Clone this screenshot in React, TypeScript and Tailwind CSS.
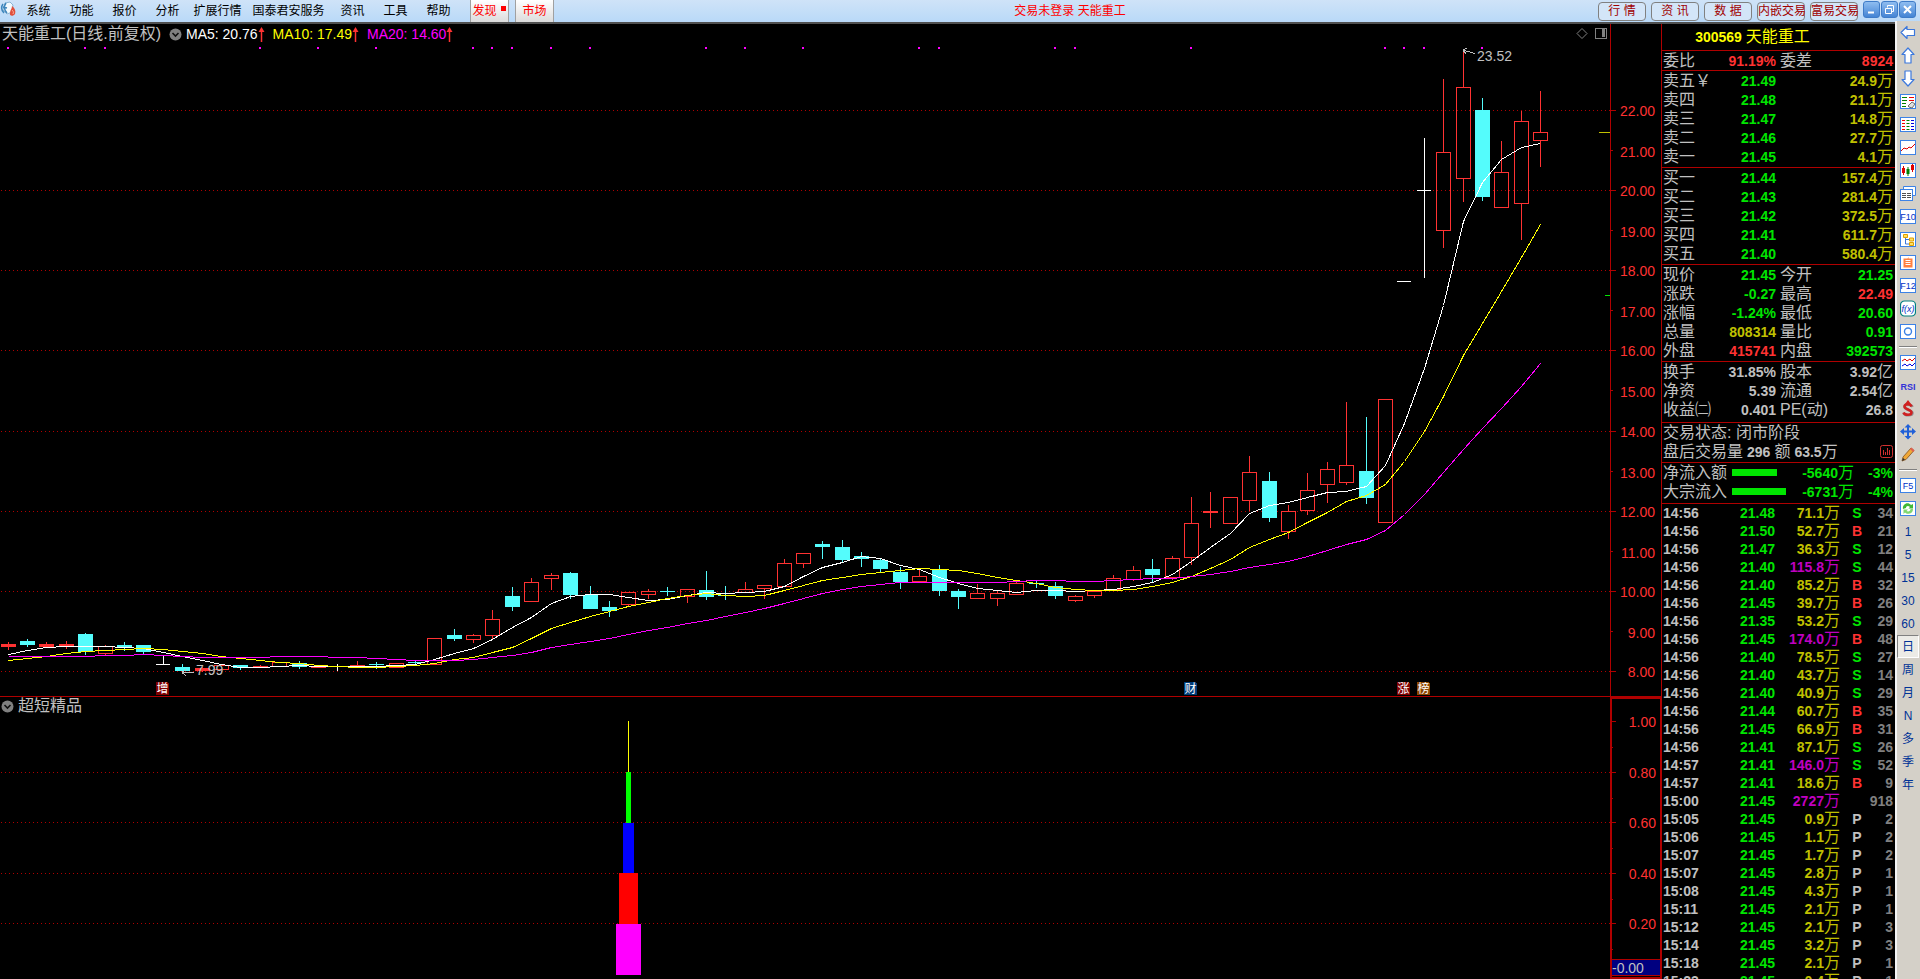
import { ReactNode } from "react";
import clsx from "clsx";

type Kind = "up" | "down" | "flat";
// kind, body top, body bottom, high, low
type Candle = [Kind, number, number, number, number];

const MENU = [
  { label: "系统", width: "w-[43px]" },
  { label: "功能", width: "w-[43px]" },
  { label: "报价", width: "w-[43px]" },
  { label: "分析", width: "w-[43px]" },
  { label: "扩展行情", width: "w-[57px]" },
  { label: "国泰君安服务", width: "w-[85px]" },
  { label: "资讯", width: "w-[43px]" },
  { label: "工具", width: "w-[43px]" },
  { label: "帮助", width: "w-[43px]" },
];

const CANDLES: Candle[] = [
  ["up", 644, 646, 642, 649], ["down", 641, 645, 639, 646], ["up", 644, 646, 642, 647], ["up", 644, 645, 641, 648],
  ["down", 634, 652, 633, 654], ["up", 646, 653, 645, 654], ["down", 645, 648, 642, 650], ["down", 645, 652, 645, 653],
  ["flat", 664, 664, 656, 664], ["down", 667, 671, 664, 671], ["up", 668, 670, 667, 671], ["up", 665, 669, 665, 669],
  ["down", 665, 668, 665, 669], ["up", 666, 667, 665, 667], ["up", 662, 666, 662, 666], ["down", 663, 667, 661, 668],
  ["up", 666, 667, 666, 667], ["flat", 666, 666, 664, 670], ["up", 665, 666, 661, 666], ["down", 664, 665, 662, 668],
  ["up", 663, 667, 663, 667], ["down", 662, 663, 661, 664], ["up", 638, 664, 638, 664], ["down", 635, 639, 629, 640],
  ["up", 635, 639, 634, 642], ["up", 619, 635, 610, 639], ["down", 596, 607, 587, 610], ["up", 582, 601, 578, 601],
  ["up", 575, 578, 573, 589], ["down", 573, 595, 572, 598], ["down", 595, 609, 586, 609], ["down", 607, 611, 601, 616],
  ["up", 592, 604, 592, 606], ["up", 591, 594, 589, 598], ["down", 591, 592, 587, 595], ["up", 589, 596, 589, 602],
  ["down", 590, 597, 571, 599], ["down", 595, 596, 586, 599], ["up", 589, 592, 582, 592], ["up", 585, 588, 585, 598],
  ["up", 563, 586, 559, 586], ["up", 553, 563, 553, 567], ["down", 544, 547, 541, 558], ["down", 547, 560, 540, 561],
  ["down", 556, 559, 552, 566], ["down", 560, 569, 558, 572], ["down", 572, 582, 567, 588], ["up", 576, 581, 570, 582],
  ["down", 570, 591, 565, 595], ["down", 591, 597, 589, 608], ["up", 593, 598, 584, 598], ["up", 593, 598, 591, 605],
  ["up", 583, 594, 582, 594], ["down", 583, 584, 581, 587], ["down", 586, 596, 582, 598], ["up", 596, 600, 595, 601],
  ["up", 591, 595, 591, 597], ["up", 578, 589, 575, 589], ["up", 570, 579, 566, 580], ["down", 569, 575, 559, 582],
  ["up", 558, 577, 556, 579], ["up", 523, 557, 497, 564], ["up", 511, 512, 492, 527], ["up", 497, 523, 497, 523],
  ["up", 472, 500, 456, 510], ["down", 481, 518, 472, 521], ["up", 511, 531, 505, 538], ["up", 490, 510, 473, 514],
  ["up", 469, 484, 462, 502], ["up", 465, 482, 402, 484], ["down", 471, 498, 417, 503], ["up", 399, 522, 399, 522],
  ["flat", 281, 281, 281, 281], ["flat", 190, 190, 138, 277], ["up", 152, 230, 79, 247], ["up", 87, 178, 50, 201],
  ["down", 110, 197, 98, 200], ["up", 172, 207, 141, 207], ["up", 121, 203, 111, 239], ["up", 132, 140, 91, 166],
];

const MA5 = [
  654, 650, 647, 646, 646, 646, 647, 648, 652, 656, 660, 664, 667, 667, 666, 665, 666, 666, 666, 666,
  665, 664, 659, 653, 648, 639, 627, 617, 603, 596, 594, 594, 597, 600, 599, 595, 592, 593, 592, 591,
  586, 576, 567, 562, 556, 558, 565, 569, 577, 583, 588, 590, 592, 590, 590, 591, 590, 589, 586, 582,
  574, 561, 547, 533, 513, 505, 502, 497, 492, 491, 486, 465, 423, 368, 305, 221, 182, 159, 147, 143,
];
const MA10 = [
  660, 658, 656, 653, 651, 650, 649, 648, 649, 651, 653, 656, 658, 660, 662, 663, 665, 666, 667, 667,
  666, 665, 663, 659, 657, 652, 647, 638, 628, 622, 616, 611, 606, 602, 598, 595, 593, 595, 596, 595,
  590, 585, 580, 577, 574, 572, 570, 568, 569, 570, 573, 577, 580, 583, 587, 589, 590, 590, 589, 586,
  582, 576, 568, 559, 547, 539, 532, 522, 512, 501, 495, 484, 461, 431, 396, 355, 323, 291, 257, 224,
];
const MA20 = [
  656, 656, 656, 656, 656, 655, 655, 654, 655, 656, 657, 657, 657, 657, 656, 656, 656, 657, 657, 658,
  659, 660, 660, 660, 659, 657, 655, 652, 647, 644, 641, 638, 634, 630, 627, 623, 620, 616, 612, 608,
  603, 598, 593, 589, 586, 584, 582, 582, 582, 582, 582, 582, 581, 580, 580, 581, 581, 580, 579, 578,
  578, 576, 574, 571, 567, 564, 561, 556, 550, 544, 539, 530, 514, 494, 472, 449, 428, 408, 386, 363,
];
const SIGNALS = [0, 4, 5, 13, 16, 19, 24, 25, 26, 28, 30, 36, 38, 41, 47, 48, 54, 55, 61, 71, 72, 73, 76];

const EVENTS = [
  { x: 156, text: "增", fill: "#800000" },
  { x: 1184, text: "财", fill: "#003c78" },
  { x: 1397, text: "涨", fill: "#800000" },
  { x: 1417, text: "榜", fill: "#8c4600" },
];

const ASKS = [
  ["卖五", "21.49", "24.9万"],
  ["卖四", "21.48", "21.1万"],
  ["卖三", "21.47", "14.8万"],
  ["卖二", "21.46", "27.7万"],
  ["卖一", "21.45", "4.1万"],
];
const BIDS = [
  ["买一", "21.44", "157.4万"],
  ["买二", "21.43", "281.4万"],
  ["买三", "21.42", "372.5万"],
  ["买四", "21.41", "611.7万"],
  ["买五", "21.40", "580.4万"],
];

const GREEN = "text-[#00e600]";
const RED = "text-[#ff3232]";
const GRAY = "text-[#c0c0c0]";
const OLIVE = "text-[#c0c000]";

// label, value, colour, label, value, colour
const SUMMARY = [
  ["现价", "21.45", GREEN, "今开", "21.25", GREEN],
  ["涨跌", "-0.27", GREEN, "最高", "22.49", RED],
  ["涨幅", "-1.24%", GREEN, "最低", "20.60", GREEN],
  ["总量", "808314", OLIVE, "量比", "0.91", GREEN],
  ["外盘", "415741", RED, "内盘", "392573", GREEN],
];
const FUNDAMENTALS = [
  ["换手", "31.85%", GRAY, "股本", "3.92亿", GRAY],
  ["净资", "5.39", GRAY, "流通", "2.54亿", GRAY],
  ["收益㈡", "0.401", GRAY, "PE(动)", "26.8", GRAY],
];

const TICKS = [
  ["14:56", "21.48", "71.1万", "S", "34"],
  ["14:56", "21.50", "52.7万", "B", "21"],
  ["14:56", "21.47", "36.3万", "S", "12"],
  ["14:56", "21.40", "115.8万", "S", "44"],
  ["14:56", "21.40", "85.2万", "B", "32"],
  ["14:56", "21.45", "39.7万", "B", "26"],
  ["14:56", "21.35", "53.2万", "S", "29"],
  ["14:56", "21.45", "174.0万", "B", "48"],
  ["14:56", "21.40", "78.5万", "S", "27"],
  ["14:56", "21.40", "43.7万", "S", "14"],
  ["14:56", "21.40", "40.9万", "S", "29"],
  ["14:56", "21.44", "60.7万", "B", "35"],
  ["14:56", "21.45", "66.9万", "B", "31"],
  ["14:56", "21.41", "87.1万", "S", "26"],
  ["14:57", "21.41", "146.0万", "S", "52"],
  ["14:57", "21.41", "18.6万", "B", "9"],
  ["15:00", "21.45", "2727万", "", "918"],
  ["15:05", "21.45", "0.9万", "P", "2"],
  ["15:06", "21.45", "1.1万", "P", "2"],
  ["15:07", "21.45", "1.7万", "P", "2"],
  ["15:07", "21.45", "2.8万", "P", "1"],
  ["15:08", "21.45", "4.3万", "P", "1"],
  ["15:11", "21.45", "2.1万", "P", "1"],
  ["15:12", "21.45", "2.1万", "P", "3"],
  ["15:14", "21.45", "3.2万", "P", "3"],
  ["15:18", "21.45", "2.1万", "P", "1"],
  ["15:23", "21.45", "0.4万", "P", "1"],
];

const PERIODS = ["1", "5", "15", "30", "60", "日", "周", "月", "N", "多", "季", "年"];

const barX = (i: number) => Math.floor(8 + i * 19.4);
const line = (ys: number[]) => ys.map((y, i) => `${barX(i) + 0.5},${y + 0.5}`).join(" ");

/* ---------- header ---------- */

function Logo() {
  return (
    <svg width="17" height="17" viewBox="0 0 17 17" aria-hidden="true">
      <path d="M5 2l5-1 3 3-1 7-5 2-4-4z" fill="#f4f9fd" stroke="#8ab4d4" />
      <path d="M3 3c-2 3-2 6 1 9M6 2C4 5 4 9 7 12M3 6l4 1" stroke="#3f86bc" strokeWidth="1.500" fill="none" />
      <path d="M12 5c3 2 4 5 3 8-2 3-6 2-5-1 0-3 2-4 2-7z" fill="#e0503c" />
      <path d="M12 9c1 1 2 2 1 4" stroke="#ffb09c" fill="none" />
    </svg>
  );
}

function WindowButton({ label, children }: { label: string; children: ReactNode }) {
  return (
    <button aria-label={label} className="flex h-[17px] w-[17px] items-center justify-center rounded-[3px] border border-[#3f7cc8] bg-linear-to-b from-[#8fbdf0] to-[#4484d4]">
      <svg width="11" height="11" viewBox="0 0 11 11" fill="none" stroke="#fff">{children}</svg>
    </button>
  );
}

function Header() {
  return (
    <header className="flex h-6 shrink-0 items-stretch border-b-2 border-[#505050] bg-linear-to-b from-[#cfe3f8] to-[#b9d9f8] text-[12px] leading-none text-black">
      <div className="flex w-[17px] items-start pt-px"><Logo /></div>
      <nav className="flex">
        {MENU.map((m) => (
          <button key={m.label} className={clsx("shrink-0 whitespace-nowrap text-center", m.width)}>{m.label}</button>
        ))}
      </nav>
      <div className="ml-2.5 flex gap-1.5 text-[#ff0000]">
        <button className="relative w-[39px] border-x border-[#a0a0a0] bg-linear-to-b from-white to-[#dcdcdc] pr-2.5">
          发现
          <span className="absolute right-0.5 top-1.5 size-[5px] bg-[#ff0000]" />
        </button>
        <button className="w-[39px] border-x border-[#a0a0a0] bg-linear-to-b from-white to-[#dcdcdc]">市场</button>
      </div>
      <p className="flex flex-1 items-center justify-center pr-3 text-[#ff0000]">交易未登录 天能重工</p>
      <div className="flex items-center gap-[5px] text-[#a00000]">
        {["行 情", "资 讯", "数 据", "内嵌交易", "富易交易"].map((b) => (
          <button key={b} className="h-[19px] w-12 whitespace-nowrap rounded-[4px] border border-[#808080] bg-[#d3e5f8] text-center">
            {b}
          </button>
        ))}
      </div>
      <div className="ml-[5px] mr-1 flex gap-px pt-px">
        <WindowButton label="最小化"><path d="M2 8.5h6" strokeWidth="2" /></WindowButton>
        <WindowButton label="还原"><path d="M3.5 3.5v-2h6v6h-2M1.5 4.5h6v5h-6z" /></WindowButton>
        <WindowButton label="关闭"><path d="M2 2l7 7M9 2l-7 7" strokeWidth="2" /></WindowButton>
      </div>
    </header>
  );
}

/* ---------- charts ---------- */

function FoldIcon() {
  return (
    <svg width="13" height="13" viewBox="0 0 13 13" aria-hidden="true">
      <circle cx="6.5" cy="6.5" r="6" fill="#808080" />
      <path d="M3.5 5l3 3 3-3" stroke="#101010" strokeWidth="1.6" fill="none" />
    </svg>
  );
}

function CandleShape({ candle, x }: { candle: Candle; x: number }) {
  const [kind, top, bottom, high, low] = candle;
  const color = kind === "up" ? "#ff3232" : kind === "down" ? "#54fcfc" : "#ffffff";
  return (
    <g stroke={color}>
      {high < top && <path d={`M${x + 0.5} ${high}V${top}`} />}
      {low > bottom && <path d={`M${x + 0.5} ${bottom}V${low + 1}`} />}
      {kind === "up" && <rect x={x - 6.5} y={top + 0.5} width="14" height={bottom - top} fill={bottom - top < 3 ? color : "none"} />}
      {kind === "down" && <rect x={x - 7} y={top} width="15" height={bottom - top} fill={color} stroke="none" />}
      {kind === "flat" && <path d={`M${x - 7} ${top + 0.5}h14`} />}
    </g>
  );
}

function PriceChart() {
  const prices = Array.from({ length: 15 }, (_, i) => 22 - i);
  const priceY = (p: number) => Math.round(110 + (22 - p) * 40.07);
  return (
    <section className="relative min-h-0 flex-[673]">
      <svg className="block h-full w-full" viewBox="0 24 1661 673" preserveAspectRatio="xMaxYMin meet" fill="none" shapeRendering="crispEdges">
        {prices.map((p) => (
          <g key={p} stroke="#b00000">
            {p % 2 === 0 && <path d={`M1 ${priceY(p) + 0.5}H1610`} strokeDasharray="1 3" />}
            <path d={`M1610 ${priceY(p) + 0.5}h${p % 2 === 0 ? 6 : 3}`} />
            <text x="1655" y={priceY(p) + (p % 2 === 0 ? 6 : 7)} textAnchor="end" fontSize="14" fill="#ff3232" stroke="none">{p.toFixed(2)}</text>
          </g>
        ))}
        <path d="M1610.5 24V697" stroke="#b00000" />
        <path d="M0 696.5H1661" stroke="#b00000" />
        <path d="M1599 132.5h11" stroke="#c0c000" />
        <path d="M1605 295.5h5" stroke="#00e600" />

        {SIGNALS.map((i) => <rect key={i} x={barX(i) - 1} y="47" width="2" height="2" fill="#ff00ff" />)}
        {CANDLES.map((c, i) => <CandleShape key={i} candle={c} x={barX(i)} />)}
        <polyline points={line(MA5)} stroke="#ffffff" />
        <polyline points={line(MA10)} stroke="#ffff00" />
        <polyline points={line(MA20)} stroke="#ff00ff" />

        <g stroke="#c0c0c0">
          <path d="M1463 50l12 3.500M1463 50l4-2M1463 50l3 4" />
          <path d="M182 672.500h12M182 672.500l4-3M182 672.500l4 3" />
        </g>
        <text x="1477" y="61" fontSize="14" fill="#c0c0c0">23.52</text>
        <text x="196" y="675" fontSize="14" fill="#c0c0c0">7.99</text>

        {EVENTS.map((e) => (
          <g key={e.text}>
            <path d={`M${e.x} 682h11l2 2v11h-13z`} fill={e.fill} />
            <text x={e.x + 6.5} y="693" textAnchor="middle" fontSize="12" fill="#ffffff">{e.text}</text>
          </g>
        ))}

        <g stroke="#808080">
          <path d="M1582 28.500l5 5-5 5-5-5z" shapeRendering="auto" />
          <rect x="1595.500" y="28.500" width="11" height="10" rx="1" />
          <path d="M1603.500 29v8" strokeWidth="3" />
        </g>
      </svg>
      <div className="absolute left-0.5 top-0 flex h-5 items-center gap-1 whitespace-nowrap text-[14px] leading-5">
        <h1 className="w-[163px] text-[16px] text-[#c0c0c0]">天能重工(日线.前复权)</h1>
        <button aria-label="折叠指标"><FoldIcon /></button>
        <Average label="MA5: 20.76" color="text-white" />
        <Average label="MA10: 17.49" color="text-[#ffff00]" />
        <Average label="MA20: 14.60" color="text-[#ff00ff]" />
      </div>
    </section>
  );
}

function Average({ label, color }: { label: string; color: string }) {
  return (
    <span className={clsx("flex items-center pr-1", color)}>
      {label}
      <svg width="7" height="15" viewBox="0 0 7 15" aria-hidden="true">
        <path d="M3.500 0l3 5h-6z" fill="#ff3232" />
        <path d="M3.500 4v11" stroke="#ff3232" strokeWidth="1.500" />
      </svg>
    </span>
  );
}

function IndicatorChart() {
  const levels: [string, number][] = [["1.00", 721], ["0.80", 772], ["0.60", 822], ["0.40", 873], ["0.20", 923]];
  return (
    <section className="relative min-h-0 flex-[282]">
      <svg className="block h-full w-full" viewBox="0 697 1661 282" preserveAspectRatio="xMaxYMin meet" fill="none" shapeRendering="crispEdges">
        {levels.map(([label, y], i) => (
          <g key={label} stroke="#b00000">
            {i > 0 && <path d={`M1 ${y + 0.5}H1610`} strokeDasharray="1 3" />}
            <path d={`M1611 ${y + 0.5}h5M1611 ${y + 26.5}h2`} />
            <text x="1656" y={y + 6} textAnchor="end" fontSize="14" fill="#ff3232" stroke="none">{label}</text>
          </g>
        ))}
        <rect x="628" y="721" width="1" height="52" fill="#ffff00" />
        <rect x="626" y="772" width="5" height="51" fill="#00ff00" />
        <rect x="623" y="823" width="11" height="50" fill="#0000ff" />
        <rect x="619" y="873" width="19" height="51" fill="#ff0000" />
        <rect x="616" y="924" width="25" height="51" fill="#ff00ff" />
        <rect x="1611" y="959.500" width="50" height="16" fill="#000080" stroke="#b00000" />
        <text x="1612" y="973" fontSize="14" fill="#c0c0c0">-0.00</text>
        <path d="M1611 698H1661V978H1611z" stroke="#b00000" strokeWidth="2" />
      </svg>
      <div className="absolute left-px top-0 flex h-[18px] items-center gap-1 text-[16px] leading-none text-[#c0c0c0]">
        <button aria-label="折叠指标"><FoldIcon /></button>
        <h2>超短精品</h2>
      </div>
    </section>
  );
}

/* ---------- quote panel ---------- */

// digits are bold, the unit after them is a plain full-size glyph
function Num({ value, color }: { value: string; color: string }) {
  const unit = /[万亿]$/.test(value) ? value.slice(-1) : "";
  return (
    <span className={clsx("whitespace-nowrap text-[14px] font-bold leading-none", color)}>
      {unit ? value.slice(0, -1) : value}
      {unit && <span className="text-[16px] font-normal">{unit}</span>}
    </span>
  );
}

function Block({ children, className }: { children: ReactNode; className?: string }) {
  return <div className={clsx("shrink-0 border-b border-[#b00000] pl-px pr-0.5", className)}>{children}</div>;
}

function BookTable({ rows, mark }: { rows: string[][]; mark?: boolean }) {
  return (
    <Block className="pb-px">
      <table className="w-full table-fixed">
        <tbody>
          {rows.map(([label, price, amount], i) => (
            <tr key={label} className="h-[19px]">
              <th className="w-12 whitespace-nowrap p-0 text-left font-normal leading-none">{label}{mark && i === 0 ? "￥" : ""}</th>
              <td className="w-[65px] p-0 text-right leading-none"><Num value={price} color={GREEN} /></td>
              <td className="p-0 text-right leading-none"><Num value={amount} color={OLIVE} /></td>
            </tr>
          ))}
        </tbody>
      </table>
    </Block>
  );
}

function PairTable({ rows }: { rows: string[][] }) {
  return (
    <table className="w-full table-fixed">
      <tbody>
        {rows.map(([a, av, ac, b, bv, bc]) => (
          <tr key={a} className="h-[19px] whitespace-nowrap">
            <th className="w-12 p-0 text-left font-normal leading-none">{a}</th>
            <td className="w-[65px] p-0 text-right leading-none"><Num value={av} color={ac} /></td>
            <th className="w-[52px] p-0 pl-1 text-left font-normal leading-none">{b}</th>
            <td className="p-0 text-right leading-none"><Num value={bv} color={bc} /></td>
          </tr>
        ))}
      </tbody>
    </table>
  );
}

function Flow({ label, bar, amount, percent }: { label: string; bar: string; amount: string; percent: string }) {
  return (
    <div className="flex h-[19px] items-center leading-none">
      <span className="w-[69px]">{label}</span>
      <span className={clsx("h-[7px] bg-[#00e600]", bar)} />
      <span className="ml-auto"><Num value={amount} color={GREEN} /></span>
      <span className="w-[39px] text-right"><Num value={percent} color={GREEN} /></span>
    </div>
  );
}

const SIDE: Record<string, string> = { S: GREEN, B: RED, P: GRAY };

function QuotePanel() {
  return (
    <aside className="flex w-[234px] shrink-0 flex-col overflow-hidden border-l border-[#b00000] text-[16px] text-[#c0c0c0]">
      <h2 className="flex h-[27px] shrink-0 items-center justify-center gap-1 border-b border-[#b00000] pr-[52px] leading-none text-[#ffff00]">
        <span className="text-[14px] font-bold">300569</span>天能重工
      </h2>
      <Block>
        <PairTable rows={[["委比", "91.19%", RED, "委差", "8924", RED]]} />
      </Block>
      <BookTable rows={ASKS} mark />
      <BookTable rows={BIDS} />
      <Block className="pb-px"><PairTable rows={SUMMARY} /></Block>
      <Block className="pb-[3px]"><PairTable rows={FUNDAMENTALS} /></Block>
      <Block className="pb-px">
        <p className="h-[19px] leading-[19px]">交易状态: 闭市阶段</p>
        <p className="flex h-[19px] items-center gap-1 leading-none">
          盘后交易量 <Num value="296" color={GRAY} /> 额 <Num value="63.5万" color={GRAY} />
          <svg className="ml-auto" width="13" height="13" viewBox="0 0 13 13" fill="none" stroke="#d03030" aria-hidden="true">
            <rect x="0.500" y="0.500" width="12" height="12" rx="2" />
            <path d="M3.500 10V5M5.500 10V7M7.500 10V3M9.500 10V5" />
          </svg>
        </p>
      </Block>
      <Block className="pb-0.5">
        <Flow label="净流入额" bar="w-[45px]" amount="-5640万" percent="-3%" />
        <Flow label="大宗流入" bar="w-[54px]" amount="-6731万" percent="-4%" />
      </Block>
      <div className="min-h-0 flex-1 overflow-hidden pl-px pr-0.5">
        <table className="w-full table-fixed">
          <tbody>
            {TICKS.map(([time, price, amount, side, count], i) => (
              <tr key={i} className="h-[18px]">
                <td className="w-12 p-0 leading-none"><Num value={time} color={GRAY} /></td>
                <td className="w-16 p-0 text-right leading-none"><Num value={price} color={GREEN} /></td>
                <td className="w-[65px] p-0 text-right leading-none">
                  <Num value={amount} color={parseFloat(amount) >= 100 ? "text-[#c000c0]" : OLIVE} />
                </td>
                <td className="w-7 p-0 pl-1.5 text-center leading-none"><Num value={side} color={SIDE[side] ?? GRAY} /></td>
                <td className="p-0 text-right leading-none"><Num value={count} color="text-[#808080]" /></td>
              </tr>
            ))}
          </tbody>
        </table>
      </div>
    </aside>
  );
}

/* ---------- tool rail ---------- */

function Frame({ children }: { children?: ReactNode }) {
  return (
    <>
      <rect x="0.500" y="1.500" width="15" height="14" fill="#fff" stroke="#3c82e6" />
      {children}
    </>
  );
}

const arrow = (d: string) => <path d={d} fill="#fff" stroke="#3c78dc" strokeWidth="1.200" strokeLinejoin="round" />;
const word = (t: string) => <text x="8" y="12" textAnchor="middle" fontSize="9" fill="#0032c8">{t}</text>;

const TOOLS_TOP: [string, ReactNode][] = [
  ["后退", arrow("M1 8.500l6-6v3h7.500v6H7v3z")],
  ["上翻", arrow("M8 1l6 6.500h-3V16H5V7.500H2z")],
  ["下翻", arrow("M8 16l6-6.500h-3V1H5v8.500H2z")],
  ["报价设置", <Frame>
    <path d="M2 4.500h5M2 7.500h5M2 10.500h4M2 13.500h4" stroke="#008000" />
    <path d="M9 4.500h5M9 7.500h5" stroke="#f00000" />
    <path d="M8 13l4-4 3 2-3 4-3-1z" fill="#e0e0e0" stroke="#707070" />
  </Frame>],
  ["行情列表", <Frame>
    <path d="M2 4.500h3M2 7.500h3M2 10.500h3M2 13.500h3" stroke="#f00000" />
    <path d="M6.500 4.500h3M6.500 7.500h3M6.500 10.500h3M6.500 13.500h3" stroke="#008000" />
    <path d="M11 4.500h3M11 7.500h3M11 10.500h3M11 13.500h3" stroke="#0000e0" />
  </Frame>],
  ["分时", <Frame><path d="M1 12l3-3 3 1 2-2 2 1 4-4" stroke="#e00000" fill="none" /></Frame>],
  ["K线", <Frame>
    <path d="M3.500 4v9M12.500 2v8" stroke="#e00000" /><path d="M8 5v9" stroke="#008000" />
    <path d="M2 6h3v5H2zM11 3h3v5h-3z" fill="#e00000" /><path d="M6.500 7h3v5h-3z" fill="#008000" />
  </Frame>],
  ["多窗口", <>
    <path d="M3.500 4.500v-3h12v9h-3" fill="#fff" stroke="#3c82e6" />
    <rect x="0.500" y="4.500" width="12" height="11" fill="#fff" stroke="#3c82e6" />
    <path d="M2 8.500h4M7 8.500h4M2 10.500h4M7 10.500h4M2 12.500h4M7 12.500h4" stroke="#505050" />
  </>],
  ["基本资料", <Frame>{word("F10")}</Frame>],
  ["板块", <Frame>
    <path d="M5.500 6v7h4M5.500 8.500h4" stroke="#3c78dc" fill="none" />
    <path d="M3.500 3.500h4v3h-4zM9.500 7h4v3h-4zM9.500 11.500h4v3h-4z" fill="#ffe060" stroke="#e0a000" />
  </Frame>],
  ["自选", <Frame><path d="M3.500 4.500h4l1-1.500v1.500h4v9h-9z" fill="#ff8040" /><path d="M5.500 6.500h5M5.500 8.500h5M5.500 10.500h5" stroke="#fff" /></Frame>],
  ["委托", <Frame>{word("F12")}</Frame>],
  ["公式", <>
    <rect x="0.500" y="1" width="15" height="15" rx="4" fill="#fff" stroke="#008080" strokeWidth="1.200" />
    <text x="8" y="12" textAnchor="middle" fontSize="9" fontStyle="italic" fill="#0032c8">f(x)</text>
  </>],
  ["圆形", <Frame><circle cx="8" cy="8.500" r="3.500" fill="none" stroke="#3c82e6" strokeWidth="1.400" /></Frame>],
];
const TOOLS_MID: [string, ReactNode][] = [
  ["叠加", <Frame>
    <path d="M2 7l3-2 2 2 3-2 2 2 3-3" stroke="#e00000" fill="none" />
    <path d="M2 12l3-2 2 2 3-2 2 2 3-3" stroke="#0000e0" fill="none" />
  </Frame>],
  ["RSI", <text x="8" y="13" textAnchor="middle" fontSize="9" fontWeight="bold" fill="#3232d8">RSI</text>],
  ["除权", <>
    <path d="M12.500 7c-1-3-8-3-8 0s8 3 8 6-8 3-9 0" stroke="#909090" strokeWidth="2.500" fill="none" />
    <path d="M11.500 6.500c-1-3-7-3-7 0s7 3 7 6-7 3-8 0" stroke="#d02020" strokeWidth="2.500" fill="none" />
    <path d="M8 0l3 4H5z" fill="#d02020" />
  </>],
  ["移动", <path d="M8 1l3.500 3.500H9V7.500h3V5L16 8.500 12 12V9.500H9V13h2.500L8 16.500 4.500 13H7V9.500H4V12L0 8.500 4 5v2.500h3V4.500H4.500z" fill="#2060d8" />],
  ["画线", <>
    <path d="M2 15l1-4 8-9 3 2.500-8 9z" fill="#f0a838" stroke="#805020" strokeWidth="0.800" />
    <path d="M10 3l3 3 1.500-1.500-3-3z" fill="#e06050" /><path d="M2 15l1-3 2 1.500z" fill="#303030" />
  </>],
];
const TOOLS_LOW: [string, ReactNode][] = [
  ["切换", <Frame>{word("F5")}</Frame>],
  ["刷新", <Frame>
    <path d="M3 9c-1-5 5-8 8-4l2-1v4.500H8.500L10 7C8 5 6 6 6 8z" fill="#40b838" />
    <path d="M13 9c0 5-6 6-8 3.500L3.500 14V9.500H8L6.500 11c2 1 4 0 4-2z" fill="#80d870" />
  </Frame>],
];

function ToolGroup({ tools }: { tools: [string, ReactNode][] }) {
  return (
    <>
      {tools.map(([label, icon]) => (
        <button key={label} aria-label={label} className="flex h-[23px] shrink-0 items-center justify-center">
          <svg width="16" height="17" viewBox="0 0 16 17">{icon}</svg>
        </button>
      ))}
    </>
  );
}

function Divider() {
  return <div className="mx-0.5 my-[3px] h-0.5 shrink-0 border-b border-t border-b-white border-t-[#808080]" />;
}

function ToolRail() {
  return (
    <nav className="-mt-[3px] flex w-[25px] shrink-0 flex-col overflow-hidden border-l-2 border-[#f4f4f4] bg-[#d4d0c8] pr-px text-[12px] leading-none text-[#003296]">
      <ToolGroup tools={TOOLS_TOP} />
      <Divider />
      <ToolGroup tools={TOOLS_MID} />
      <Divider />
      <ToolGroup tools={TOOLS_LOW} />
      {PERIODS.map((p) => (
        <button
          key={p}
          className={clsx(
            "h-[23px] shrink-0 text-center",
            p === "日" && "border border-b-white border-l-[#808080] border-r-white border-t-[#808080] bg-[#ecebe6]"
          )}
        >
          {p}
        </button>
      ))}
    </nav>
  );
}

export default function App() {
  return (
    <div className="flex h-screen flex-col overflow-hidden bg-black font-['Liberation_Sans','Noto_Sans_CJK_SC',sans-serif]">
      <Header />
      <div className="flex min-h-0 flex-1">
        <main className="flex min-w-0 flex-1 flex-col">
          <PriceChart />
          <IndicatorChart />
        </main>
        <QuotePanel />
        <ToolRail />
      </div>
    </div>
  );
}
